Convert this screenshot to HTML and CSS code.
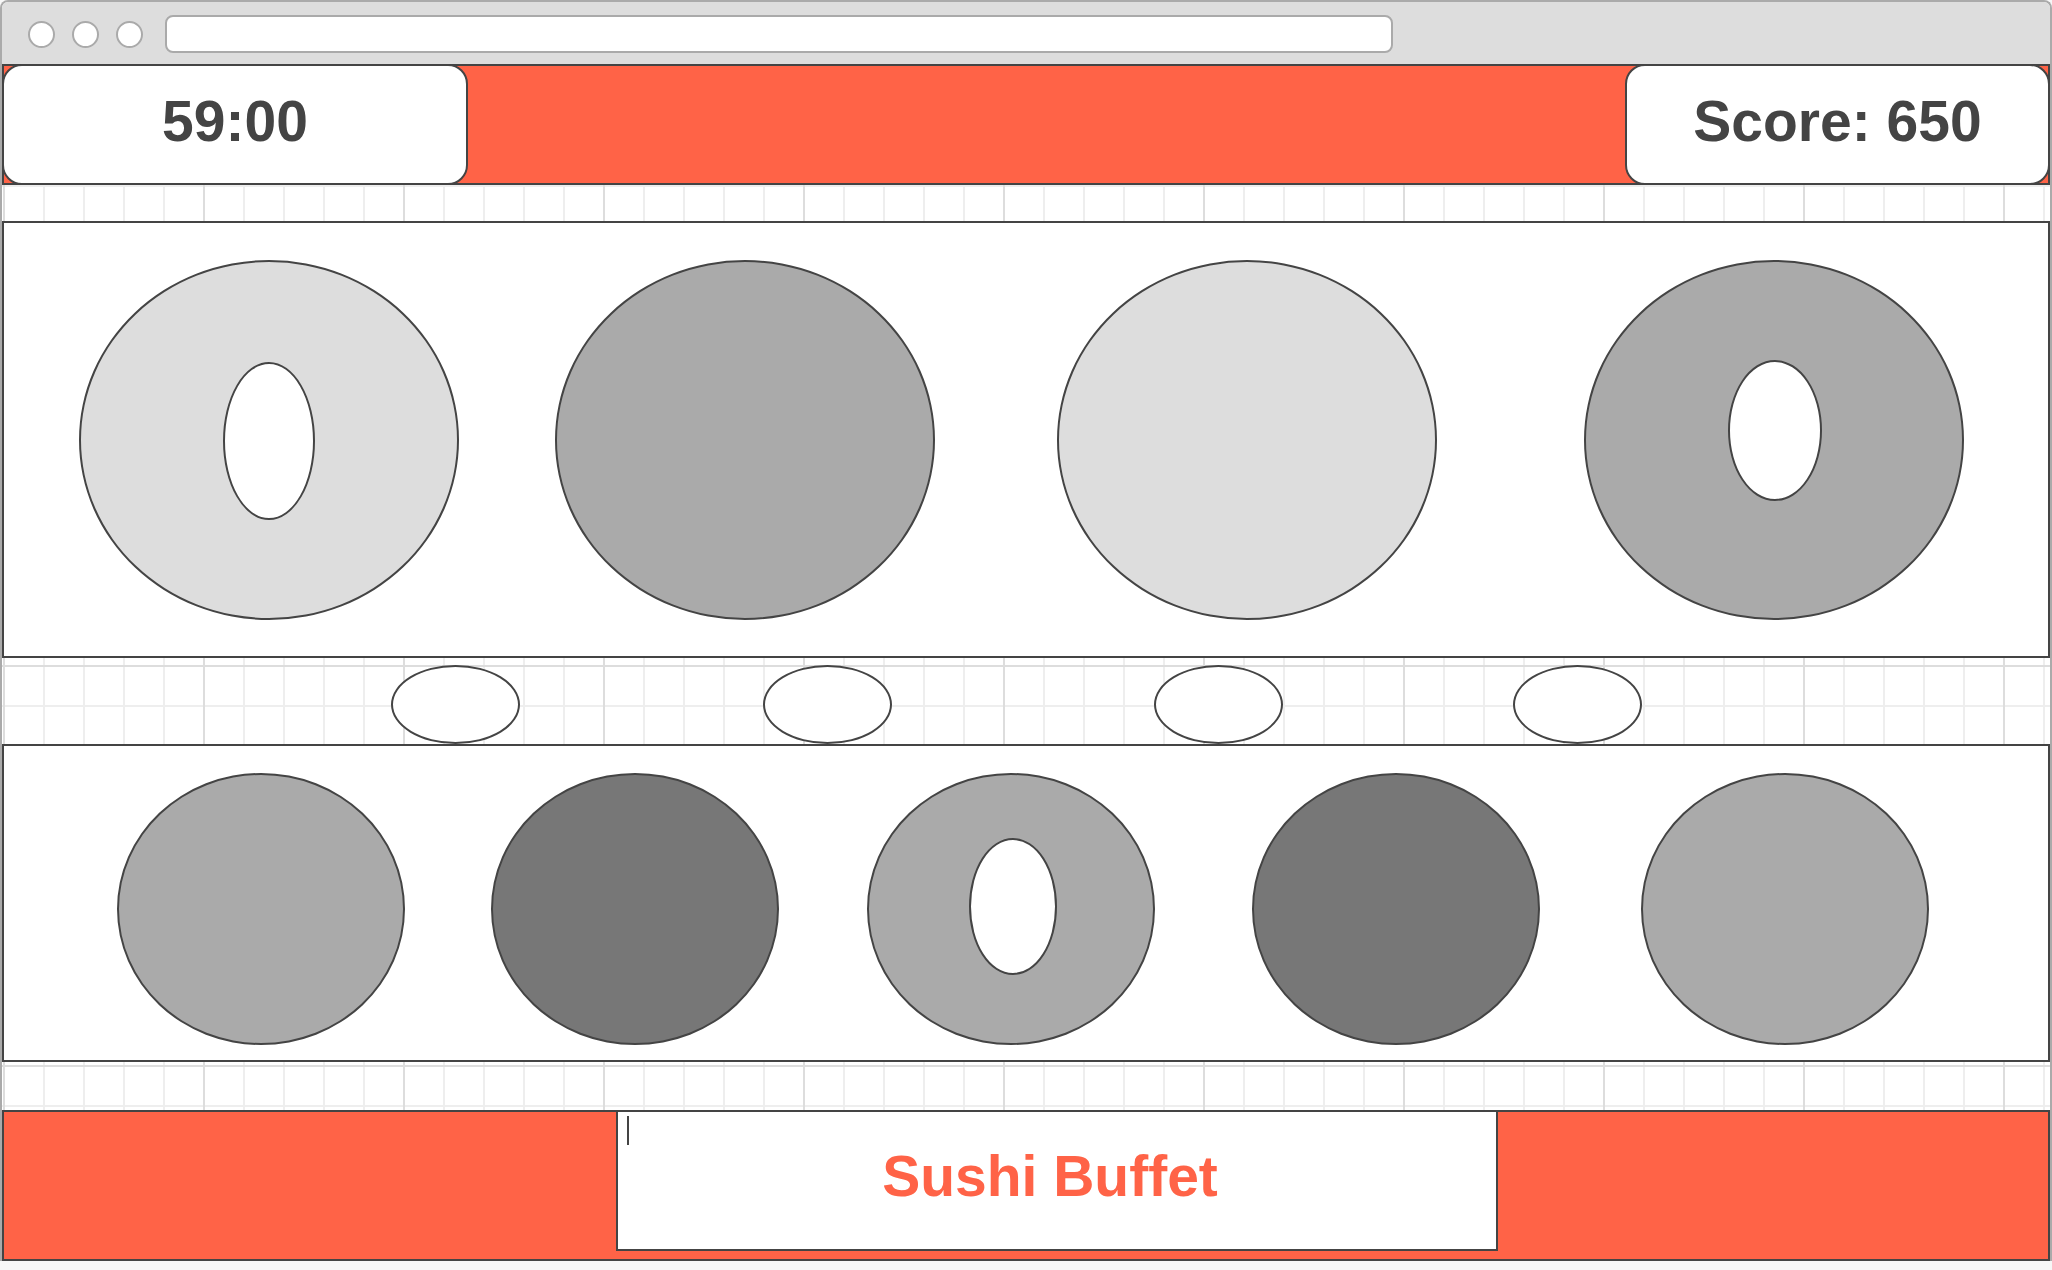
FILE: index.html
```html
<!DOCTYPE html>
<html lang="en">

<head>
    <meta charset="UTF-8">
    <meta name="viewport" content="width=device-width, initial-scale=1.0">
    <title>Sushi Buffet</title>
    <link rel="stylesheet" href="styles.css">
</head>

<body>
    <div class="window">
        <div class="chrome">
            <span class="dot"></span>
            <span class="dot"></span>
            <span class="dot"></span>
            <div class="address"></div>
        </div>

        <div class="screen">
            <header class="topbar">
                <div class="badge timer">59:00</div>
                <div class="badge score">Score: 650</div>
            </header>

            <!-- conveyor belt -->
            <section class="belt belt-top">
                <div class="plate light"><div class="hole"></div></div>
                <div class="plate medium"></div>
                <div class="plate light"></div>
                <div class="plate medium"><div class="hole hole-high"></div></div>
            </section>

            <div class="dishes">
                <span class="dish"></span>
                <span class="dish"></span>
                <span class="dish"></span>
                <span class="dish"></span>
            </div>

            <!-- customer plates -->
            <section class="belt belt-bottom">
                <div class="plate medium"></div>
                <div class="plate dark"></div>
                <div class="plate medium"><div class="hole"></div></div>
                <div class="plate dark"></div>
                <div class="plate medium"></div>
            </section>

            <footer class="footer">
                <div class="title-box">
                    <span class="caret"></span>
                    Sushi Buffet
                </div>
            </footer>
        </div>
    </div>
</body>

</html>
```

FILE: styles.css
```css
* {
    box-sizing: border-box;
}

body {
    margin: 0;
    background-color: #f7f7f7;
    font-family: 'Liberation Sans', Arial, sans-serif;
}

.window {
    width: 2052px;
    border: 2px solid #aaa;
    border-bottom: none;
    border-radius: 8px 8px 0 0;
    overflow: hidden;
}

.chrome {
    display: flex;
    align-items: center;
    height: 62px;
    padding: 2px 0 0 26px;
    background-color: #ddd;
}

.dot {
    width: 27px;
    height: 27px;
    margin-right: 17px;
    border: 2px solid #aaa;
    border-radius: 50%;
    background-color: #fff;
}

.address {
    width: 1228px;
    height: 38px;
    margin-left: 5px;
    border: 2px solid #aaa;
    border-radius: 8px;
    background-color: #fff;
}

.screen {
    height: 1197px;
    background-color: #fff;
    background-image:
        linear-gradient(to right, #ddd 2px, transparent 2px),
        linear-gradient(to bottom, #ddd 2px, transparent 2px),
        linear-gradient(to right, #eee 2px, transparent 2px),
        linear-gradient(to bottom, #eee 2px, transparent 2px);
    background-size: 200px 200px, 200px 200px, 40px 40px, 40px 40px;
    background-position: 1px 1px;
}

.topbar {
    display: flex;
    justify-content: space-between;
    height: 121px;
    border: 2px solid #444;
    background-color: #ff6347;
}

.badge {
    display: flex;
    align-items: center;
    justify-content: center;
    height: 121px;
    margin: -2px;
    padding-bottom: 7px;
    border: 2px solid #444;
    border-radius: 20px;
    background-color: #fff;
    color: #444;
    font-size: 57px;
    font-weight: bold;
}

.timer {
    width: 466px;
}

.score {
    width: 425px;
}

.belt {
    display: flex;
    border: 2px solid #444;
    background-color: #fff;
}

.belt-top {
    height: 437px;
    margin-top: 36px;
    padding-left: 75px;
    align-items: center;
}

.belt-top .plate {
    width: 380px;
    height: 360px;
}

.belt-top .plate:nth-child(2) { margin-left: 96px; }
.belt-top .plate:nth-child(3) { margin-left: 122px; }
.belt-top .plate:nth-child(4) { margin-left: 147px; }

.belt-bottom {
    height: 318px;
    padding: 27px 0 0 113px;
    align-items: flex-start;
}

.belt-bottom .plate {
    width: 288px;
    height: 272px;
}

.belt-bottom .plate:nth-child(2) { margin-left: 86px; }
.belt-bottom .plate:nth-child(3) { margin-left: 88px; }
.belt-bottom .plate:nth-child(4) { margin-left: 97px; }
.belt-bottom .plate:nth-child(5) { margin-left: 101px; }

.plate {
    display: flex;
    align-items: center;
    justify-content: center;
    flex-shrink: 0;
    border: 2px solid #444;
    border-radius: 50%;
}

.light {
    background-color: #ddd;
}

.medium {
    background-color: #aaa;
}

.dark {
    background-color: #777;
}

.hole {
    width: 92px;
    height: 158px;
    margin-top: 2px;
    border: 2px solid #444;
    border-radius: 50%;
    background-color: #fff;
}

.hole-high {
    width: 94px;
    height: 141px;
    margin: 0 0 18px 2px;
}

.belt-bottom .hole {
    width: 88px;
    height: 137px;
    margin: 0 0 6px 4px;
}

.dishes {
    display: flex;
    align-items: flex-end;
    height: 86px;
    padding-left: 389px;
}

.dish {
    width: 129px;
    height: 79px;
    border: 2px solid #444;
    border-radius: 50%;
    background-color: #fff;
}

.dish:nth-child(2) { margin-left: 243px; }
.dish:nth-child(3) { margin-left: 262px; }
.dish:nth-child(4) { margin-left: 230px; }

.footer {
    height: 151px;
    margin-top: 48px;
    border: 2px solid #444;
    background-color: #ff6347;
}

.title-box {
    position: relative;
    display: flex;
    align-items: center;
    justify-content: center;
    width: 882px;
    height: 141px;
    margin: -2px 0 0 612px;
    padding: 0 14px 10px 0;
    border: 2px solid #444;
    background-color: #fff;
    color: #ff6347;
    font-size: 57px;
    font-weight: bold;
}

.caret {
    position: absolute;
    left: 9px;
    top: 4px;
    width: 2px;
    height: 29px;
    background-color: #444;
}
```
